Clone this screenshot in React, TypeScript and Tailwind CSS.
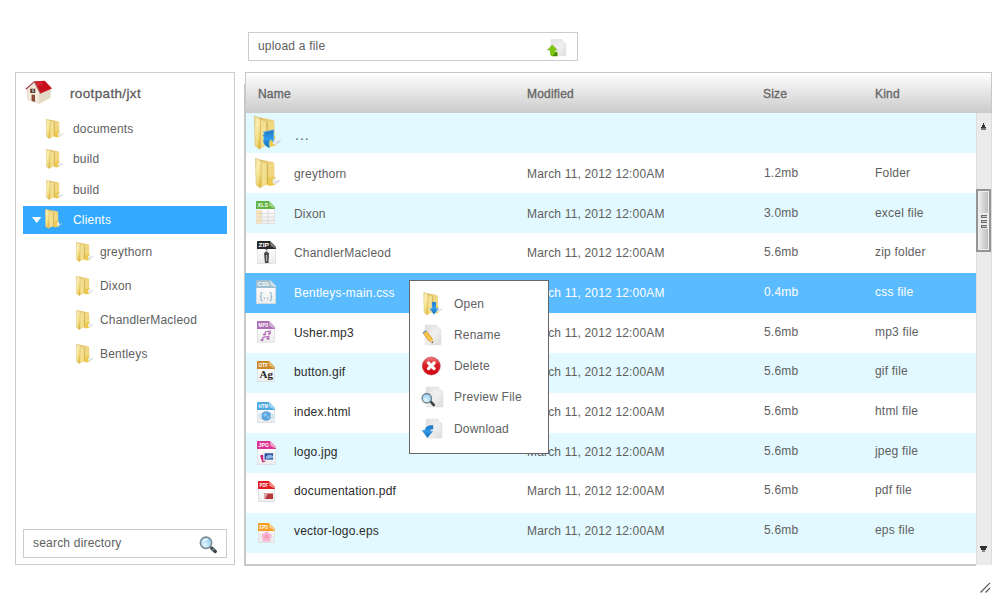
import type { ReactNode } from 'react';

const Defs = () => (
  <svg width="0" height="0" className="absolute">
    <defs>
      <linearGradient id="cover" x1="0" y1="0" x2="0.6" y2="1">
        <stop offset="0" stopColor="#e6d69a" />
        <stop offset="0.35" stopColor="#fbeeb0" />
        <stop offset="0.75" stopColor="#f3dc82" />
        <stop offset="1" stopColor="#e0bd48" />
      </linearGradient>
      <linearGradient id="back" x1="0" y1="0" x2="0.7" y2="1">
        <stop offset="0" stopColor="#d9bc62" />
        <stop offset="0.4" stopColor="#ecd07a" />
        <stop offset="1" stopColor="#eec845" />
      </linearGradient>
      <linearGradient id="page" x1="0" y1="0" x2="1" y2="1">
        <stop offset="0" stopColor="#dedede" />
        <stop offset="0.5" stopColor="#f0f0f0" />
        <stop offset="1" stopColor="#dcdcdc" />
      </linearGradient>
      <linearGradient id="blue" x1="0" y1="0" x2="0" y2="1">
        <stop offset="0" stopColor="#1c74c4" />
        <stop offset="0.5" stopColor="#2f9ae8" />
        <stop offset="1" stopColor="#1466b4" />
      </linearGradient>
      <radialGradient id="lens" cx="0.4" cy="0.7" r="0.7">
        <stop offset="0" stopColor="#e4f6ff" />
        <stop offset="1" stopColor="#8fc8ee" />
      </radialGradient>
      <linearGradient id="red" x1="0" y1="0" x2="0" y2="1">
        <stop offset="0" stopColor="#f08080" />
        <stop offset="0.4" stopColor="#d8242c" />
        <stop offset="1" stopColor="#d4000c" />
      </linearGradient>
      <linearGradient id="sheet" x1="0" y1="0" x2="0" y2="1">
        <stop offset="0" stopColor="#ffffff" />
        <stop offset="1" stopColor="#ececec" />
      </linearGradient>
    </defs>
  </svg>
);

const FolderShape = () => (
  <g>
    <path d="M18 24.5 25.5 20.5 23.5 23.5 17 27Z" fill="#bfc3ca" opacity="0.7" />
    <path d="M3.5 0.8 17.5 3.4 19 5V18L20 19V26.2L14.5 27.6 11 26 5.5 29Z" fill="url(#back)" />
    <path d="M6 3.5 11.5 5V25.5L6 28Z" fill="#f7e59c" opacity="0.75" />
    <path d="M12.5 5 18.6 5.2V18L13 19Z" fill="#f2da88" opacity="0.75" />
    <path d="M12 5V25.8" stroke="#c9a548" strokeWidth="0.9" />
    <path d="M17.5 20.5 20.3 20 20.8 24.2 17.5 25.8Z" fill="#e9eef3" />
    <path d="M0.2 0.2 1.4 0 5.8 2.7V28.2L5 29.6 0.8 26.4Z" fill="url(#cover)" stroke="#cfb050" strokeWidth="0.5" />
  </g>
);

const SmallFolder = () => (
  <svg viewBox="0 0 26 30" className="h-5 w-[18px] shrink-0" preserveAspectRatio="none">
    <FolderShape />
  </svg>
);

const Slot = ({ children }: { children: ReactNode }) => (
  <svg width="48" height="40" viewBox="0 0 48 40" className="shrink-0">{children}</svg>
);

type FileShapeProps = { x: number; y: number; w: number; h: number; color: string; fold: string; label: string; children?: ReactNode };

const FileShape = ({ x, y, w, h, color, fold, label, children }: FileShapeProps) => (
  <g transform={`translate(${x} ${y})`}>
    <rect x="0.3" y="6" width={w - 0.6} height={h - 6.3} fill="url(#sheet)" stroke="#d4d9dc" strokeWidth="0.6" />
    <path d={`M0 0.6Q0 0 0.6 0H${w - 6}L${w} 6V8H0Z`} fill={color} />
    <path d={`M${w - 6} 0 ${w} 6 ${w} 7.5 ${w - 5.5} 5Z`} fill={fold} />
    <text x="1.6" y="6" fontFamily="Liberation Sans" fontWeight="700" fontSize="5.2" letterSpacing="0" fill="#fff" textLength={w - 8.5} lengthAdjust="spacingAndGlyphs">{label}</text>
    {children}
  </g>
);

const icons: Record<string, ReactNode> = {
  up: (
    <g>
      <g transform="translate(8.3 3.2) scale(1.06 1.12)"><FolderShape /></g>
      <path d="M17 22.5 18.5 20.5 17.2 19.2 27.7 16.8V28.8L24.6 26.5Q22 29 23.6 35 15.5 32 18 24.5Z" fill="url(#blue)" stroke="#5ab4f0" strokeWidth="0.6" />
    </g>
  ),
  folder: <g transform="translate(9.3 5.5)"><FolderShape /></g>,
  xls: (
    <FileShape x={10} y={8} w={19} h={23} color="#62b345" fold="#a0d58b" label="XLS">
      <rect x="0.5" y="9" width="5" height="13.4" fill="#fbe3b4" />
      <path d="M0.5 12.5H18.5M0.5 16H18.5M0.5 19.5H18.5M5.5 9V22.5M12 9V22.5" stroke="#d8d5cf" strokeWidth="0.8" />
    </FileShape>
  ),
  zip: (
    <FileShape x={11} y={8} w={19} h={23} color="#292929" fold="#777" label="ZIP">
      <path d="M9.5 8V13" stroke="#777" strokeWidth="2" strokeDasharray="1 0.7" />
      <path d="M7 12Q9.5 10 12 12L11.5 22H8Z" fill="#4b4b4b" />
      <path d="M9.6 14V20" stroke="#bbb" strokeWidth="1" />
    </FileShape>
  ),
  css: (
    <FileShape x={10} y={7} w={20} h={24} color="#9fbfd1" fold="#d3e2ea" label="CSS">
      <text x="3.6" y="18.5" fontFamily="Liberation Mono" fontWeight="700" fontSize="9" letterSpacing="0" fill="#6f9ab3" textLength="13" lengthAdjust="spacingAndGlyphs">{'{..}'}</text>
    </FileShape>
  ),
  mp3: (
    <FileShape x={11} y={8} w={18} h={21.5} color="#ae70b5" fold="#d4afd7" label="MP3">
      <path d="M8.3 13.5V11L13.2 10V12.5M5.8 19V16.5L11.8 15.3V17.5" stroke="#b36bb8" strokeWidth="1.2" fill="none" />
      <ellipse cx="7.4" cy="13.5" rx="1.6" ry="1.1" fill="#b36bb8" /><ellipse cx="12.3" cy="12.6" rx="1.6" ry="1.1" fill="#b36bb8" />
      <ellipse cx="5" cy="19" rx="1.6" ry="1.1" fill="#b36bb8" /><ellipse cx="11" cy="17.8" rx="1.6" ry="1.1" fill="#b36bb8" />
    </FileShape>
  ),
  otf: (
    <FileShape x={11} y={8} w={18} h={21} color="#ca882a" fold="#e5ba78" label="OTF">
      <text x="2.6" y="17.4" fontFamily="Liberation Serif" fontWeight="700" fontSize="11" letterSpacing="0" fill="#292929">Ag</text>
    </FileShape>
  ),
  htm: (
    <FileShape x={11} y={9} w={18} h={21} color="#4fa9df" fold="#a2d5f3" label="HTM">
      <ellipse cx="9.2" cy="14" rx="7.2" ry="3.2" fill="none" stroke="#b8d9ee" strokeWidth="1.2" />
      <circle cx="9.2" cy="14" r="4.8" fill="#5aa4de" />
      <path d="M6 12.5 9 10.8 10 13 7.8 15ZM10 15 13 13.5 11.5 17Z" fill="#94c8ec" />
    </FileShape>
  ),
  jpg: (
    <FileShape x={11} y={8} w={19} h={24} color="#dc3595" fold="#f1a0cc" label="JPG">
      <path d="M3 14.5 6 13.5 8.5 20.5 5.5 21.5Z" fill="#c22379" />
      <rect x="6.5" y="11.5" width="10.5" height="8" fill="#fff" stroke="#e1e1e1" strokeWidth="0.4" />
      <rect x="7.5" y="12.3" width="8.6" height="6.3" fill="#2c4fa0" />
      <path d="M9 15.5Q12 12.5 16 15V17L9 18Z" fill="#8ab6e3" />
    </FileShape>
  ),
  pdf: (
    <FileShape x={12} y={8} w={17} h={21} color="#e31c24" fold="#f48e89" label="PDF">
      <rect x="6" y="12.5" width="9" height="5.5" fill="#b5353a" />
      <path d="M6 12.5H10L7 18H6Z" fill="#dba9aa" />
    </FileShape>
  ),
  eps: (
    <FileShape x={12} y={10} w={17} h={20} color="#f59d1f" fold="#fbd08e" label="EPS">
      <path d="M2 8V20M5 8V20M8 8V20M11 8V20M14 8V20" stroke="#dedede" strokeWidth="1.2" strokeDasharray="1.3 1.3" />
      <g fill="#f7b3d3">
        <circle cx="8.5" cy="10.8" r="2.3" /><circle cx="11.4" cy="12.9" r="2.3" /><circle cx="10.3" cy="16.4" r="2.3" />
        <circle cx="6.7" cy="16.4" r="2.3" /><circle cx="5.6" cy="12.9" r="2.3" />
      </g>
      <circle cx="8.5" cy="13.8" r="1.8" fill="#f283b1" />
      <circle cx="8.5" cy="13.8" r="0.7" fill="#f9d46a" />
    </FileShape>
  ),
};

const PageShape = ({ x, y, w, h }: { x: number; y: number; w: number; h: number }) => (
  <g transform={`translate(${x} ${y})`}>
    <path d={`M0 1Q0 0 1 0H${w - 5}L${w} 5V${h - 1}Q${w} ${h} ${w - 1} ${h}H1Q0 ${h} 0 ${h - 1}Z`} fill="url(#page)" stroke="#dcdcdc" strokeWidth="0.4" />
    <path d={`M${w - 5} 0 Q${w - 5.5} 4.5 ${w} 5Z`} fill="#fff" stroke="#cfcfcf" strokeWidth="0.5" />
  </g>
);

const menuIcons: Record<string, ReactNode> = {
  Open: (
    <g>
      <g transform="translate(3.5 2.5) scale(0.75 0.76)"><FolderShape /></g>
      <path d="M12 12H16V18.5H18.6L14 24.5 9.6 18.5H12Z" fill="url(#blue)" stroke="#7dbdf0" strokeWidth="0.4" />
    </g>
  ),
  Rename: (
    <g>
      <PageShape x={5} y={4} w={16} h={20} />
      <path d="M3.2 12.5 6.6 10 12.7 18.2 13 22 9.4 20.5Z" fill="#f2b52c" stroke="#c98620" strokeWidth="0.4" />
      <path d="M5 11.3 11 19.5" stroke="#ffe28a" strokeWidth="1" />
      <path d="M2.4 11.5 5.6 9 6.8 10.3 3.5 12.8Z" fill="#7ba2c4" />
      <path d="M12.7 18.4 13 22 9.6 20.5Z" fill="#ecd8b8" /><path d="M12.9 20.4 13 22 11.4 21.3Z" fill="#333" />
    </g>
  ),
  Delete: (
    <g>
      <circle cx="11.3" cy="13" r="9" fill="url(#red)" stroke="#b9404a" strokeWidth="0.6" />
      <path d="M8.5 10 14.1 15.6M14.1 10 8.5 15.6" stroke="#fff" strokeWidth="3.2" strokeLinecap="round" />
    </g>
  ),
  'Preview File': (
    <g>
      <PageShape x={6} y={3} w={17} h={20} />
      <path d="M10.2 17.2 13.8 21" stroke="#3c4246" strokeWidth="2.6" strokeLinecap="round" />
      <circle cx="6.8" cy="14.2" r="4.7" fill="url(#lens)" stroke="#6d7f8b" strokeWidth="1.3" />
    </g>
  ),
  Download: (
    <g>
      <PageShape x={6} y={4} w={16} h={19} />
      <path d="M13 10.6Q5.6 10 4.8 15.6H2.3L7.4 22.6 12.6 16.4H10Q10 14 13 14Z" fill="url(#blue)" stroke="#2278c5" strokeWidth="0.5" />
    </g>
  ),
};

const HomeIcon = () => (
  <svg width="28" height="25" viewBox="0 0 28 25" className="shrink-0">
    <path d="M2.5 9.5 9.5 3.5 14.5 13.5 14.8 23.5 2.8 19.5Z" fill="#f3eadb" stroke="#c4b9a6" strokeWidth="0.5" />
    <path d="M14.5 12.5 26 8.8 25.4 18 14.8 23.5Z" fill="#e3d8c3" />
    <path d="M9.5 1.3 19.8 0.8 27 8.6 15.5 13.6Z" fill="#c7101c" />
    <path d="M9.5 1.3 16 1 18.5 5 12 6.5Z" fill="#dd3540" opacity="0.5" />
    <path d="M0.8 9.3 9.5 1.6 15.6 13.5" fill="none" stroke="#a8434a" strokeWidth="1.2" />
    <rect x="5.2" y="8.7" width="5" height="4.3" fill="#6a3a2b" /><rect x="7" y="9.2" width="1.9" height="3" fill="#8e9fb0" />
    <path d="M6.6 14.5 10 15V22L6.6 20.8Z" fill="#8e4934" />
  </svg>
);

const SearchIcon = () => (
  <svg width="19" height="18" viewBox="0 0 19 18" className="shrink-0">
    <path d="M11.3 10.8 13.5 12.8" stroke="#b58d70" strokeWidth="2.2" />
    <path d="M12.8 12.2 16.3 15.4" stroke="#3b4348" strokeWidth="3.4" strokeLinecap="round" />
    <path d="M13.4 13.6 15.8 13" stroke="#9dc0d4" strokeWidth="1" />
    <circle cx="7" cy="6.7" r="5.7" fill="url(#lens)" stroke="#7b8790" strokeWidth="1.5" />
    <path d="M4 5.6Q5.5 3 8.8 3.5" stroke="#fff" strokeWidth="1.1" fill="none" />
  </svg>
);

const UploadIcon = () => (
  <svg width="20" height="18" viewBox="0 0 20 18" className="shrink-0">
    <PageShape x={4} y={0.2} w={15} h={16.6} />
    <path d="M5.3 6 10.2 11H8V13.3H10.2V17H4.4Q3 15.5 3.2 11H0.5Z" fill="#7fc810" stroke="#68aa14" strokeWidth="0.5" />
    <path d="M8 13.4H10.2V17H5Q7.5 16 8 13.4Z" fill="#4c870b" />
  </svg>
);

const roots = [
  { name: 'documents', cls: 'mt-0' },
  { name: 'build', cls: 'mt-0.5' },
  { name: 'build', cls: 'mt-[3px]' },
];
const children = ['greythorn', 'Dixon', 'ChandlerMacleod', 'Bentleys'];

const files = [
  { name: '...', icon: 'up', size: '', kind: '', dark: false },
  { name: 'greythorn', icon: 'folder', size: '1.2mb', kind: 'Folder', dark: false },
  { name: 'Dixon', icon: 'xls', size: '3.0mb', kind: 'excel file', dark: false },
  { name: 'ChandlerMacleod', icon: 'zip', size: '5.6mb', kind: 'zip folder', dark: false },
  { name: 'Bentleys-main.css', icon: 'css', size: '0.4mb', kind: 'css file', dark: false },
  { name: 'Usher.mp3', icon: 'mp3', size: '5.6mb', kind: 'mp3 file', dark: true },
  { name: 'button.gif', icon: 'otf', size: '5.6mb', kind: 'gif file', dark: true },
  { name: 'index.html', icon: 'htm', size: '5.6mb', kind: 'html file', dark: true },
  { name: 'logo.jpg', icon: 'jpg', size: '5.6mb', kind: 'jpeg file', dark: true },
  { name: 'documentation.pdf', icon: 'pdf', size: '5.6mb', kind: 'pdf file', dark: true },
  { name: 'vector-logo.eps', icon: 'eps', size: '5.6mb', kind: 'eps file', dark: true },
];

const Sidebar = () => (
  <aside className="flex h-[493px] w-[220px] flex-col border border-[#ccc] px-[7px] pb-1.5">
    <div className="flex h-[42px] items-center pl-0.5">
      <div className="-mt-1"><HomeIcon /></div>
      <span className="ml-[17px] text-[13.5px] leading-4 tracking-[0.35px] text-[#5c5c5c] [-webkit-text-stroke:0.3px_#5c5c5c]">rootpath/jxt</span>
    </div>
    {roots.map((r, i) => (
      <div key={i} className={`flex h-7 items-center pl-[23px] ${r.cls}`}>
        <SmallFolder />
        <span className="ml-[9px]">{r.name}</span>
      </div>
    ))}
    <div className="mt-0.5 flex h-7 items-center bg-[#33aaff] pl-[9px] text-white">
      <svg width="10" height="6" viewBox="0 0 10 6"><path d="M0 0H9.4L4.7 6Z" fill="#fff" /></svg>
      <div className="-mt-0.5 ml-[3px]"><SmallFolder /></div>
      <span className="ml-2.5">Clients</span>
    </div>
    <div className="mt-1 flex flex-col gap-1.5">
      {children.map((c) => (
        <div key={c} className="flex h-7 items-center pl-[53px]">
          <SmallFolder />
          <span className="ml-1.5">{c}</span>
        </div>
      ))}
    </div>
    <div className="mt-auto flex h-[29px] items-center justify-between border border-[#ccc] pr-2 pl-[9px]">
      <span className="pb-0.5">search directory</span>
      <div className="pt-0.5"><SearchIcon /></div>
    </div>
  </aside>
);

const columns = 'grid-cols-[48px_233px_237px_111px_1fr]';

const Scrollbar = () => (
  <div className="flex h-[452px] w-4 flex-col items-center border-x border-[#ddd] bg-[#ebebeb] py-2.5">
    <svg width="7" height="8" viewBox="0 0 7 8" className="mr-px"><path d="M3 0H4V2H5V4H6V7H1V4H2V2H3Z" fill="#333" /><path d="M1 5H6V7H1Z" fill="#777" /></svg>
    <div className="mt-[58px] -ml-px flex h-[63px] w-[15px] shrink-0 items-center justify-center self-start border-2 border-[#949494] bg-gradient-to-r from-[#f0f0f0] to-[#b8b8b8] outline-1 -outline-offset-3 outline-[#eee]">
      <svg width="8" height="16" viewBox="0 0 8 16" shapeRendering="crispEdges" className="shrink-0">
        <rect width="8" height="16" fill="#ececec" />
        <path d="M1 2H7V5H1ZM1 7H7V10H1ZM1 12H7V15H1Z" fill="#6b6b6b" />
        <path d="M2 3H7V4H2ZM2 8H7V9H2ZM2 13H7V14H2Z" fill="#c8c8c8" />
      </svg>
    </div>
    <svg width="7" height="7" viewBox="0 0 7 7" className="mt-auto mr-px mb-0.5"><path d="M0 0H7V2H6V4H5V6H2V4H1V2H0Z" fill="#333" /><path d="M2 4H5V6H2Z" fill="#888" /></svg>
  </div>
);

const FileTable = () => (
  <section className="relative ml-[9px] w-[748px]">
    <div className="ml-px grid h-[41px] grid-cols-[12px_269px_236px_112px_1fr] items-center border border-b-0 border-[#c8c8c8] bg-gradient-to-b from-white to-[#cbcbcb] pt-px text-[#666] [-webkit-text-stroke:0.35px_#666]">
      <span />
      <span>Name</span>
      <span>Modified</span>
      <span>Size</span>
      <span>Kind</span>
    </div>
    <div className="absolute top-3 left-0 h-[29px] w-px bg-[#c8c8c8]" />
    <div className="flex">
      <div className="h-[453px] w-[732px] border-b-2 border-l-2 border-[#c8c8c8]">
        {files.map((f, i) => {
          const selected = i === 4;
          const top = 13 - (i - 1) / 3;
          const tone = selected
            ? 'bg-[#5bbbff] text-white shadow-[-1px_0_0_#5bbbff]'
            : i % 2 === 0 ? 'bg-[#e2f9ff]' : 'bg-white';
          return (
            <div key={f.name} className={`grid h-10 ${columns} ${tone}`}>
              <Slot>{icons[f.icon]}</Slot>
              {i === 0 ? (
                <span className="pt-3.5 pl-px text-[14px] tracking-[1px]">{f.name}</span>
              ) : (
                <span className={f.dark ? 'text-[#2b2b2b]' : ''} style={{ paddingTop: top }}>{f.name}</span>
              )}
              <span className="tracking-[0.17px]" style={{ paddingTop: top }}>{i ? 'March 11, 2012 12:00AM' : ''}</span>
              <span style={{ paddingTop: top - 1 }}>{f.size}</span>
              <span style={{ paddingTop: top - 1 }}>{f.kind}</span>
            </div>
          );
        })}
      </div>
      <Scrollbar />
    </div>
  </section>
);

const ContextMenu = () => (
  <div className="absolute top-[280px] left-[409px] h-[174px] w-[140px] border border-[#666] bg-white pt-[7px] pl-2.5">
    {Object.keys(menuIcons).map((label) => (
      <div key={label} className="flex h-[31.25px] items-center">
        <svg width="24" height="27" viewBox="0 0 24 27" className="shrink-0">{menuIcons[label]}</svg>
        <span className="ml-2.5">{label}</span>
      </div>
    ))}
  </div>
);

export default function App() {
  return (
    <main className="relative h-[600px] w-[1000px] overflow-hidden bg-white pt-8 font-['Liberation_Sans',sans-serif] text-[12px] leading-4 tracking-[0.2px] text-[#606060]">
      <Defs />
      <div className="ml-[248px] flex h-[29px] w-[330px] items-center justify-between border border-[#ccc] pr-2.5 pl-[9px]">
        <span className="pb-0.5">upload a file</span>
        <div className="pt-0.5"><UploadIcon /></div>
      </div>
      <div className="mt-[11px] ml-[15px] flex">
        <Sidebar />
        <FileTable />
      </div>
      <ContextMenu />
      <svg width="12" height="12" viewBox="0 0 12 12" className="absolute top-[582px] left-[980px]">
        <path d="M0.5 10.5 10 0.8M5.5 10.5 10 6" stroke="#555" strokeWidth="1.2" />
      </svg>
    </main>
  );
}
